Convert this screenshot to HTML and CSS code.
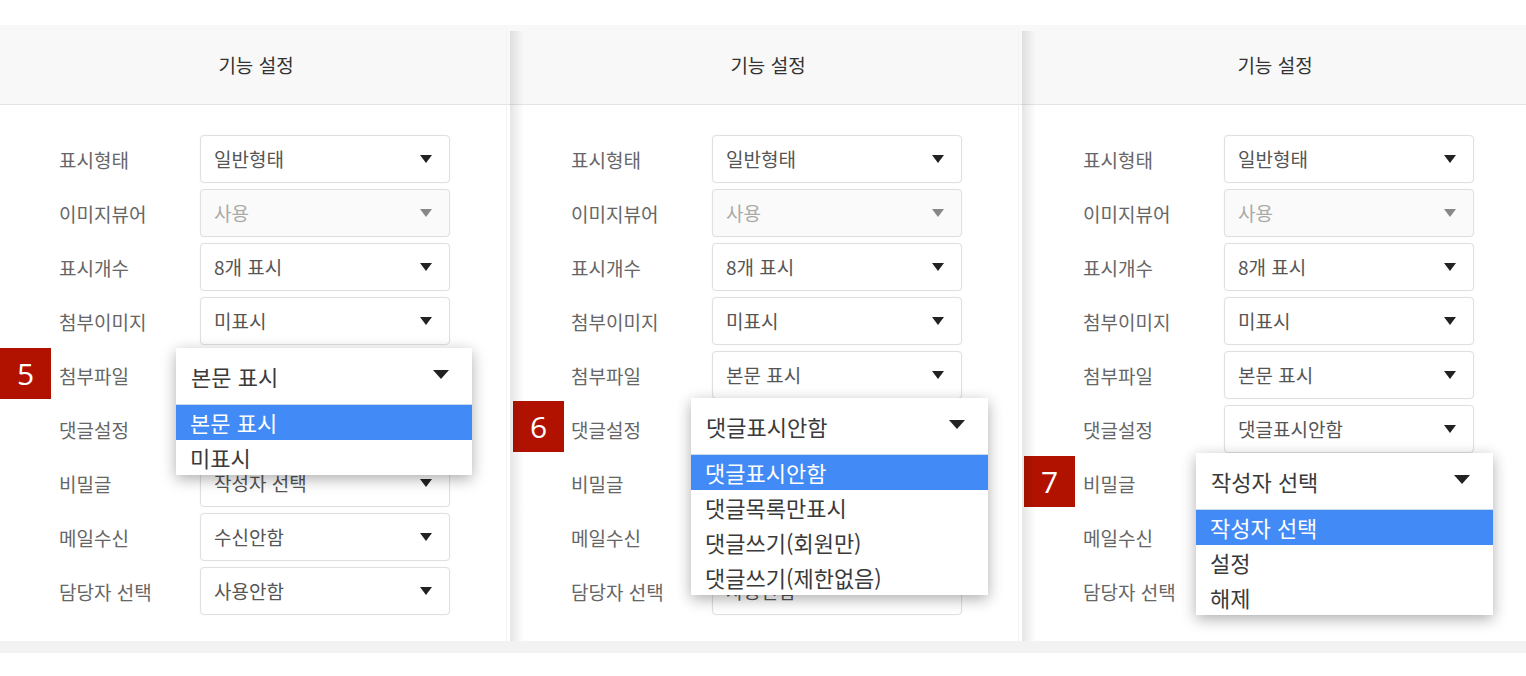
FILE: index.html
```html
<!DOCTYPE html>
<html lang="ko">
<head>
    <meta charset="UTF-8">
    <meta name="viewport" content="width=device-width, initial-scale=1.0">
    <title>기능 설정</title>

    <link rel="stylesheet" href="styles.css">
</head>

<body>
    <div class="board">
        <!-- 첨부파일 -->
        <section class="panel">
            <h2 class="panel-head">기능 설정</h2>
            <ul class="fields">
                <li class="field"><span class="field-label">표시형태</span><div class="select">일반형태</div></li>
                <li class="field"><span class="field-label">이미지뷰어</span><div class="select disabled">사용</div></li>
                <li class="field"><span class="field-label">표시개수</span><div class="select">8개 표시</div></li>
                <li class="field"><span class="field-label">첨부이미지</span><div class="select">미표시</div></li>
                <li class="field">
                    <span class="badge badge-a">5</span>
                    <span class="field-label">첨부파일</span><div class="select">본문 표시</div>
                    <div class="dropdown dropdown-a">
                        <div class="dropdown-value">본문 표시</div>
                        <ul class="dropdown-list">
                            <li class="selected">본문 표시</li>
                            <li>미표시</li>
                        </ul>
                    </div>
                </li>
                <li class="field"><span class="field-label">댓글설정</span><div class="select">댓글표시안함</div></li>
                <li class="field"><span class="field-label">비밀글</span><div class="select">작성자 선택</div></li>
                <li class="field"><span class="field-label">메일수신</span><div class="select">수신안함</div></li>
                <li class="field"><span class="field-label">담당자 선택</span><div class="select">사용안함</div></li>
            </ul>
        </section>

        <!-- 댓글설정 -->
        <section class="panel">
            <h2 class="panel-head">기능 설정</h2>
            <ul class="fields">
                <li class="field"><span class="field-label">표시형태</span><div class="select">일반형태</div></li>
                <li class="field"><span class="field-label">이미지뷰어</span><div class="select disabled">사용</div></li>
                <li class="field"><span class="field-label">표시개수</span><div class="select">8개 표시</div></li>
                <li class="field"><span class="field-label">첨부이미지</span><div class="select">미표시</div></li>
                <li class="field"><span class="field-label">첨부파일</span><div class="select">본문 표시</div></li>
                <li class="field">
                    <span class="badge badge-b">6</span>
                    <span class="field-label">댓글설정</span><div class="select">댓글표시안함</div>
                    <div class="dropdown dropdown-b">
                        <div class="dropdown-value">댓글표시안함</div>
                        <ul class="dropdown-list">
                            <li class="selected">댓글표시안함</li>
                            <li>댓글목록만표시</li>
                            <li>댓글쓰기(회원만)</li>
                            <li>댓글쓰기(제한없음)</li>
                        </ul>
                    </div>
                </li>
                <li class="field"><span class="field-label">비밀글</span><div class="select">작성자 선택</div></li>
                <li class="field"><span class="field-label">메일수신</span><div class="select">수신안함</div></li>
                <li class="field"><span class="field-label">담당자 선택</span><div class="select">사용안함</div></li>
            </ul>
        </section>

        <!-- 비밀글 -->
        <section class="panel">
            <h2 class="panel-head">기능 설정</h2>
            <ul class="fields">
                <li class="field"><span class="field-label">표시형태</span><div class="select">일반형태</div></li>
                <li class="field"><span class="field-label">이미지뷰어</span><div class="select disabled">사용</div></li>
                <li class="field"><span class="field-label">표시개수</span><div class="select">8개 표시</div></li>
                <li class="field"><span class="field-label">첨부이미지</span><div class="select">미표시</div></li>
                <li class="field"><span class="field-label">첨부파일</span><div class="select">본문 표시</div></li>
                <li class="field"><span class="field-label">댓글설정</span><div class="select">댓글표시안함</div></li>
                <li class="field">
                    <span class="badge badge-c">7</span>
                    <span class="field-label">비밀글</span><div class="select">작성자 선택</div>
                    <div class="dropdown dropdown-c">
                        <div class="dropdown-value">작성자 선택</div>
                        <ul class="dropdown-list">
                            <li class="selected">작성자 선택</li>
                            <li>설정</li>
                            <li>해제</li>
                        </ul>
                    </div>
                </li>
                <li class="field"><span class="field-label">메일수신</span><div class="select">수신안함</div></li>
                <li class="field"><span class="field-label">담당자 선택</span><div class="select">사용안함</div></li>
            </ul>
        </section>
    </div>
</body>

</html>
```

FILE: styles.css
```css
body {
    margin: 0;
    background-color: #ffffff;
    font-family: "Noto Sans CJK KR", "Noto Sans", sans-serif;
}

.board {
    display: flex;
    margin-top: 25px;
    border-bottom: 12px solid #f2f2f2;
}

.panel {
    position: relative;
    width: 512px;
    background-color: #ffffff;
}

.panel:last-child {
    flex: 1;
}

/* 패널 사이 세로 그림자 */
.panel + .panel::before {
    content: "";
    position: absolute;
    top: 6px;
    bottom: 0;
    left: -2px;
    width: 14px;
    background: linear-gradient(to right, rgba(0, 0, 0, 0.1), rgba(0, 0, 0, 0));
    z-index: 1;
    pointer-events: none;
}

.panel + .panel::after {
    content: "";
    position: absolute;
    top: 0;
    bottom: 0;
    left: -6px;
    width: 1px;
    background-color: #f3f3f3;
}

.panel-head {
    margin: 0;
    height: 79px;
    line-height: 79px;
    text-align: center;
    font-size: 19px;
    font-weight: normal;
    color: #333333;
    background-color: #f8f8f8;
    border-bottom: 1px solid #e3e3e3;
}

.fields {
    list-style: none;
    margin: 0;
    padding: 30px 0 26px 59px;
    display: flex;
    flex-direction: column;
    gap: 6px;
}

.field {
    position: relative;
    display: flex;
    align-items: center;
}

.field-label {
    width: 141px;
    font-size: 19px;
    color: #666666;
}

.select {
    position: relative;
    box-sizing: border-box;
    width: 250px;
    height: 48px;
    padding-left: 13px;
    line-height: 46px;
    font-size: 19px;
    color: #555555;
    background-color: #ffffff;
    border: 1px solid #e0e0e0;
    border-radius: 4px;
    box-shadow: 0 0 2px rgba(0, 0, 0, 0.06);
}

.select::after {
    content: "";
    position: absolute;
    right: 17px;
    top: 19px;
    border-left: 6.5px solid transparent;
    border-right: 6.5px solid transparent;
    border-top: 8px solid #222222;
}

.select.disabled {
    color: #aaaaaa;
    background-color: #fafafa;
}

.select.disabled::after {
    border-top-color: #888888;
}

/* 번호 배지 */
.badge {
    position: absolute;
    left: -59px;
    width: 51px;
    height: 51px;
    line-height: 51px;
    text-align: center;
    font-family: "Open Sans", "Liberation Sans", sans-serif;
    font-size: 30px;
    color: #ffffff;
    background-color: #b11200;
}

.badge-a {
    top: -3px;
}

.badge-b {
    top: -4px;
    left: -58px;
}

.badge-c {
    top: -3px;
}

/* 펼쳐진 셀렉트 */
.dropdown {
    position: absolute;
    width: 297px;
    background-color: #ffffff;
    box-shadow: 0 4px 14px rgba(0, 0, 0, 0.32);
    z-index: 2;
}

.dropdown-a {
    left: 117px;
    top: -3px;
    width: 296px;
}

.dropdown-b {
    left: 120px;
    top: -7px;
}

.dropdown-c {
    left: 113px;
    top: -6px;
}

.dropdown-value {
    position: relative;
    height: 56px;
    line-height: 56px;
    padding-left: 15px;
    font-size: 22px;
    color: #3a3a3a;
    border-bottom: 1px solid #c9d9ee;
}

.dropdown-value::after {
    content: "";
    position: absolute;
    right: 23px;
    top: 22px;
    border-left: 8px solid transparent;
    border-right: 8px solid transparent;
    border-top: 9px solid #222222;
}

.dropdown-list {
    list-style: none;
    margin: 0;
    padding: 0;
}

.dropdown-list li {
    height: 35px;
    line-height: 35px;
    padding-left: 14px;
    font-size: 22px;
    color: #3a3a3a;
}

.dropdown-list li.selected {
    color: #ffffff;
    background-color: #428bf7;
}
```
